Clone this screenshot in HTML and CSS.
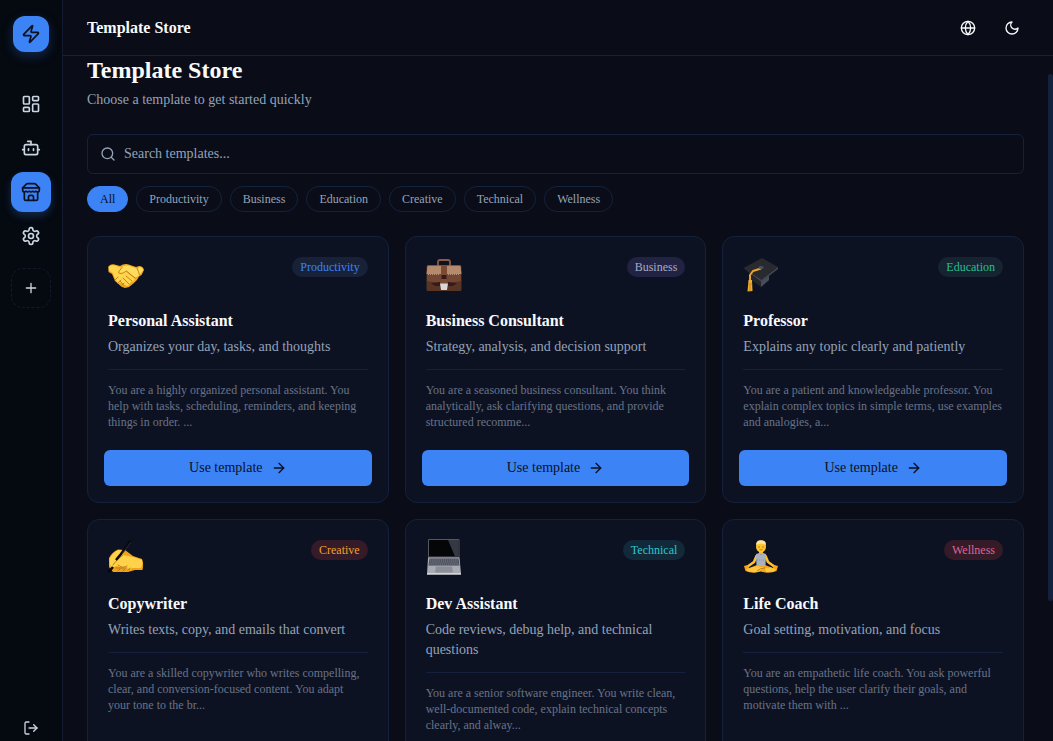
FILE: index.html
```html
<!DOCTYPE html>
<html lang="en">
<head>
<meta charset="utf-8">
<meta name="viewport" content="width=device-width, initial-scale=1">
<title>Template Store</title>
<link rel="stylesheet" href="styles.css">
</head>
<body>
<svg class="defs" aria-hidden="true">
  <symbol id="arrow" viewBox="0 0 24 24"><path d="M5 12h14"/><path d="m12 5 7 7-7 7"/></symbol>
</svg>
<div class="app">
  <aside class="sidebar">
    <a class="logo" href="#" aria-label="Home"><svg class="icon icon-lg" viewBox="0 0 24 24"><path d="M4 14a1 1 0 0 1-.78-1.63l9.9-10.2a.5.5 0 0 1 .86.46l-1.92 6.02A1 1 0 0 0 13 10h7a1 1 0 0 1 .78 1.63l-9.9 10.2a.5.5 0 0 1-.86-.46l1.92-6.02A1 1 0 0 0 11 14z"/></svg></a>
    <nav class="nav">
      <a class="nav-item" href="#" aria-label="Dashboard"><svg class="icon icon-lg" viewBox="0 0 24 24"><rect x="3" y="3" width="7" height="9" rx="1"/><rect x="14" y="3" width="7" height="5" rx="1"/><rect x="14" y="12" width="7" height="9" rx="1"/><rect x="3" y="16" width="7" height="5" rx="1"/></svg></a>
      <a class="nav-item" href="#" aria-label="Agents"><svg class="icon icon-lg" viewBox="0 0 24 24"><path d="M12 8V4H8"/><rect x="4" y="8" width="16" height="12" rx="2"/><path d="M2 14h2M20 14h2M15 13v2M9 13v2"/></svg></a>
      <a class="nav-item active" href="#" aria-label="Store"><svg class="icon icon-lg" viewBox="0 0 24 24"><path d="m2 7 4.41-4.41A2 2 0 0 1 7.83 2h8.34a2 2 0 0 1 1.42.59L22 7"/><path d="M4 12v8a2 2 0 0 0 2 2h12a2 2 0 0 0 2-2v-8"/><path d="M15 22v-4a2 2 0 0 0-2-2h-2a2 2 0 0 0-2 2v4"/><path d="M2 7h20"/><path d="M22 7v3a2 2 0 0 1-2 2a2.7 2.7 0 0 1-1.59-.63.7.7 0 0 0-.82 0A2.7 2.7 0 0 1 16 12a2.7 2.7 0 0 1-1.59-.63.7.7 0 0 0-.82 0A2.7 2.7 0 0 1 12 12a2.7 2.7 0 0 1-1.59-.63.7.7 0 0 0-.82 0A2.7 2.7 0 0 1 8 12a2.7 2.7 0 0 1-1.59-.63.7.7 0 0 0-.82 0A2.7 2.7 0 0 1 4 12a2 2 0 0 1-2-2V7"/></svg></a>
      <a class="nav-item" href="#" aria-label="Settings"><svg class="icon icon-lg" viewBox="0 0 24 24"><path d="M12.22 2h-.44a2 2 0 0 0-2 2v.18a2 2 0 0 1-1 1.73l-.43.25a2 2 0 0 1-2 0l-.15-.08a2 2 0 0 0-2.73.73l-.22.38a2 2 0 0 0 .73 2.73l.15.1a2 2 0 0 1 1 1.72v.51a2 2 0 0 1-1 1.74l-.15.09a2 2 0 0 0-.73 2.73l.22.38a2 2 0 0 0 2.73.73l.15-.08a2 2 0 0 1 2 0l.43.25a2 2 0 0 1 1 1.73V20a2 2 0 0 0 2 2h.44a2 2 0 0 0 2-2v-.18a2 2 0 0 1 1-1.73l.43-.25a2 2 0 0 1 2 0l.15.08a2 2 0 0 0 2.73-.73l.22-.39a2 2 0 0 0-.73-2.73l-.15-.08a2 2 0 0 1-1-1.74v-.5a2 2 0 0 1 1-1.74l.15-.09a2 2 0 0 0 .73-2.73l-.22-.38a2 2 0 0 0-2.73-.73l-.15.08a2 2 0 0 1-2 0l-.43-.25a2 2 0 0 1-1-1.73V4a2 2 0 0 0-2-2z"/><circle cx="12" cy="12" r="3"/></svg></a>
    </nav>
    <button class="nav-add" type="button" aria-label="Add"><svg class="icon" viewBox="0 0 24 24"><path d="M5 12h14M12 5v14"/></svg></button>
    <button class="logout" type="button" aria-label="Log out"><svg class="icon" viewBox="0 0 24 24"><path d="M9 21H5a2 2 0 0 1-2-2V5a2 2 0 0 1 2-2h4"/><path d="m16 17 5-5-5-5"/><path d="M21 12H9"/></svg></button>
  </aside>

  <div class="main">
    <header class="topbar">
      <span class="topbar-title">Template Store</span>
      <div class="topbar-actions">
        <button type="button" aria-label="Language"><svg class="icon" viewBox="0 0 24 24"><circle cx="12" cy="12" r="10"/><path d="M12 2a14.5 14.5 0 0 0 0 20 14.5 14.5 0 0 0 0-20"/><path d="M2 12h20"/></svg></button>
        <button type="button" aria-label="Dark mode"><svg class="icon" viewBox="0 0 24 24"><path d="M12 3a6 6 0 0 0 9 9 9 9 0 1 1-9-9Z"/></svg></button>
      </div>
    </header>

    <div class="viewport">
      <main class="content">
        <h1>Template Store</h1>
        <p class="subtitle">Choose a template to get started quickly</p>

        <label class="search">
          <svg class="icon" viewBox="0 0 24 24" aria-hidden="true"><circle cx="11" cy="11" r="8"/><path d="m21 21-4.3-4.3"/></svg>
          <input type="text" placeholder="Search templates..." aria-label="Search templates">
        </label>

        <div class="filters">
          <button type="button" class="active">All</button>
          <button type="button">Productivity</button>
          <button type="button">Business</button>
          <button type="button">Education</button>
          <button type="button">Creative</button>
          <button type="button">Technical</button>
          <button type="button">Wellness</button>
        </div>

        <section class="grid">
          <article class="card">
            <div class="card-head">
              <svg class="emoji" viewBox="0 0 36 36" aria-hidden="true">
                <path fill="#f3a81f" d="M.3 9.500Q3 6.500 6.500 7.500L12 9Q17 5.500 22 8L28 10 31 9Q35 9 36 13L33.500 18 31 19.500Q29 24 26 26L21 30 17 31Q13 30 11.500 28L7 24 4 17 .5 15Z"/>
                <path fill="#ffd54d" d="M.8 10Q3 7.500 6.500 8.500L13 10.500 10 16Q12 18.500 17 14L27 22Q26 25 23 25L20 29 16 28 14 26 10 26 7 22 5 16 1 13.500Z"/>
                <path fill="#ffdc5b" d="M12.500 11Q18 7 23 9.500L29 11.500 32 10Q35 10.500 35.300 13L31.500 18Q28 21 26 20L18.500 14Q12 18 10.800 15.500Z"/>
                <path fill="none" stroke="#c27a13" stroke-width=".9" stroke-linecap="round" d="M14 10.500 10.500 15Q12 18.500 18.500 14L27 21M18 19l6 5M15 21l6 6M12 24l4.500 5M29 11Q31 15 31.500 18M7 23l3-3M10 26l3-3M14 28l2-2"/>
              </svg>
              <span class="badge productivity">Productivity</span>
            </div>
            <h2>Personal Assistant</h2>
            <p class="desc">Organizes your day, tasks, and thoughts</p>
            <p class="preview">You are a highly organized personal assistant. You help with tasks, scheduling, reminders, and keeping things in order. ...</p>
            <button class="use" type="button">Use template<svg class="icon"><use href="#arrow"/></svg></button>
          </article>

          <article class="card">
            <div class="card-head">
              <svg class="emoji" viewBox="0 0 36 36" aria-hidden="true">
                <path fill="none" stroke="#8b5a41" stroke-width="1.800" d="M12 9V5Q12 3 14 3h8q2 0 2 2v4"/>
                <rect x=".5" y="8.500" width="35" height="25.500" rx="1.500" fill="#573423"/>
                <path fill="#754732" d="M1 12h34v12l-10 2H11L1 24Z"/>
                <path fill="#b58a6d" d="M1.500 8.500h33L35.500 17H.5Z"/>
                <path fill="#7b4b31" d="M15 8.500h6V27h-6Z"/>
                <path fill="#36181d" d="M15.500 18h5v4h-5ZM5 26l9-1v4H9ZM31 26l-9-1v4h5Z"/>
                <path fill="#d8d8dc" d="M14 26.500h8l-1 6.500h-6Z"/>
                <path fill="none" stroke="#d2b49f" stroke-width=".7" stroke-dasharray="1 1" d="M2 17.500h12M22 17.500h12"/>
              </svg>
              <span class="badge business">Business</span>
            </div>
            <h2>Business Consultant</h2>
            <p class="desc">Strategy, analysis, and decision support</p>
            <p class="preview">You are a seasoned business consultant. You think analytically, ask clarifying questions, and provide structured recomme...</p>
            <button class="use" type="button">Use template<svg class="icon"><use href="#arrow"/></svg></button>
          </article>

          <article class="card">
            <div class="card-head">
              <svg class="emoji" viewBox="0 0 36 36" aria-hidden="true">
                <path fill="#24262c" d="M8 16 26 18V23L18 30 8 23Z"/>
                <path fill="#454c5a" d="M18 24 26 18v5l-8 7Z"/>
                <path fill="#292a2f" d="M.5 11 19 1 35 10 18.500 23Z"/>
                <path fill="#454750" d="M.5 11 18.500 23 35 10v2L18.500 25Z"/>
                <path fill="none" stroke="#eaa228" stroke-width="2" stroke-linejoin="round" d="M18 11.500 10 14 7 18V25"/>
                <path fill="#efad2f" d="M5.500 23h3.500l.5 11-5 .5Z"/>
                <path stroke="#b8720f" stroke-width=".7" d="M5 27h4M7 28v6"/>
                <ellipse cx="18" cy="10.500" rx="2.500" ry="1.500" fill="#4b5363"/>
              </svg>
              <span class="badge education">Education</span>
            </div>
            <h2>Professor</h2>
            <p class="desc">Explains any topic clearly and patiently</p>
            <p class="preview">You are a patient and knowledgeable professor. You explain complex topics in simple terms, use examples and analogies, a...</p>
            <button class="use" type="button">Use template<svg class="icon"><use href="#arrow"/></svg></button>
          </article>

          <article class="card">
            <div class="card-head">
              <svg class="emoji" viewBox="0 0 36 36" aria-hidden="true">
                <path fill="#efa31d" d="M1 18Q4 12 10 9.500L17 10 25 16 34 19Q36 24 34.500 30L27 30 20 32 5 32 1 27Z"/>
                <path fill="#ffd24a" d="M1.500 19Q5 12 10.500 10L16 11 15 15 25 17 34 20Q35 24 33 28L25 28 19 29 8 26 4 28 2 25Z"/>
                <path fill="none" stroke="#bb7012" stroke-width=".9" stroke-linecap="round" d="M15 15 9 20 5 25M10 25q5 4 9 1M8 28h11M10 31l2-2M15 31l2-2M20 30l2-2"/>
                <path fill="none" stroke="#080808" stroke-width="2.500" d="M22.800.8 13 14 8 20M5 27 .3 32.500"/>
                <path stroke="#45484d" stroke-width=".6" d="m23 2-9 12"/>
              </svg>
              <span class="badge creative">Creative</span>
            </div>
            <h2>Copywriter</h2>
            <p class="desc">Writes texts, copy, and emails that convert</p>
            <p class="preview">You are a skilled copywriter who writes compelling, clear, and conversion-focused content. You adapt your tone to the br...</p>
            <button class="use" type="button">Use template<svg class="icon"><use href="#arrow"/></svg></button>
          </article>

          <article class="card">
            <div class="card-head">
              <svg class="emoji" viewBox="0 0 36 36" aria-hidden="true">
                <rect x="2" y="-1" width="31.500" height="19" rx="1" fill="#55575f"/>
                <path fill="#050608" d="M3 0h29.500v16.500H3Z"/>
                <path fill="#343943" d="M22 0h10.500v16.500H29Z"/>
                <path fill="#a8abb4" d="M2 17.500h31.500L35 34H1Z"/>
                <path fill="#454956" d="M3.500 18.500h29l1 7h-31Z"/>
                <path stroke="#a7abb8" stroke-width=".6" stroke-dasharray="1.500 .6" d="M4 20h28M4 22h28M3 24h30"/>
                <path fill="#8b8e98" d="M10 26.500h16l1 6H9Z"/>
                <path fill="#d5d5d9" d="M1 33h34v1.700H1Z"/>
              </svg>
              <span class="badge technical">Technical</span>
            </div>
            <h2>Dev Assistant</h2>
            <p class="desc">Code reviews, debug help, and technical questions</p>
            <p class="preview">You are a senior software engineer. You write clean, well-documented code, explain technical concepts clearly, and alway...</p>
            <button class="use" type="button">Use template<svg class="icon"><use href="#arrow"/></svg></button>
          </article>

          <article class="card">
            <div class="card-head">
              <svg class="emoji" viewBox="0 0 36 36" aria-hidden="true">
                <path fill="none" stroke="#ffc02e" stroke-width="2.600" stroke-linejoin="round" stroke-linecap="round" d="M13.500 16 11 22 4 27M22.500 16 25 22 32 27"/>
                <path fill="#f6a51d" d="M1 26l4-1 1 3 8-3h8l8 3 1-3 4 1-1.500 5Q26 34 18 31.500 10 34 2.500 31Z"/>
                <path fill="#ffc83a" d="M4 29 14 26 22 28 14 32Q7 32.500 4 31ZM22 28l6-.5 5 2-2 2-8 .5Z"/>
                <path fill="#ffb21c" d="M16 10h4v4h-4Z"/>
                <path fill="#a9b2c0" d="M13 14q2.500-.5 3-1 2 2.500 4 0 1 .5 3 1l-.5 12h-9Z"/>
                <path stroke="#79869b" stroke-width=".7" stroke-dasharray="1 1" d="M14 20h8"/>
                <ellipse cx="18" cy="6.500" rx="5" ry="6" fill="#ffc52e"/>
                <path fill="#ffe3a1" d="M13 5Q13 0 18 .2 23 0 23 5q-5-3-10 0Z"/>
                <path fill="none" stroke="#98630d" stroke-width=".7" d="M15 7h2M19 7h2M16.500 9.500q1.500 1 3 0M14 31q3-3 8-3"/>
              </svg>
              <span class="badge wellness">Wellness</span>
            </div>
            <h2>Life Coach</h2>
            <p class="desc">Goal setting, motivation, and focus</p>
            <p class="preview">You are an empathetic life coach. You ask powerful questions, help the user clarify their goals, and motivate them with ...</p>
            <button class="use" type="button">Use template<svg class="icon"><use href="#arrow"/></svg></button>
          </article>
        </section>
      </main>
      <div class="scroll-rail" aria-hidden="true"><div class="scroll-thumb"></div></div>
    </div>
  </div>
</div>
</body>
</html>
```
FILE: styles.css
```css
:root {
  --bg: #0a0d18;
  --side: #050910;
  --card: #0d1223;
  --border: #14213d;
  --primary: #3c83f6;
  --ink: #0b1120;
  --text: #f8fafc;
  --muted: #94a3b8;
}

* { box-sizing: border-box; }

body {
  margin: 0;
  background: var(--bg);
  color: var(--text);
  font-family: "Liberation Serif", "Times New Roman", serif;
  font-size: 14px;
  line-height: 20px;
}

h1, h2, p { margin: 0; }
button, input { font: inherit; color: inherit; }
button { padding: 0; border: 0; background: none; cursor: pointer; }

.defs { display: none; }

.icon {
  flex: none;
  width: 16px;
  height: 16px;
  fill: none;
  stroke: currentColor;
  stroke-width: 2;
  stroke-linecap: round;
  stroke-linejoin: round;
}
.icon-lg { width: 20px; height: 20px; }

.app { display: flex; height: 100vh; overflow: hidden; }

.sidebar {
  flex: none;
  display: flex;
  flex-direction: column;
  align-items: center;
  width: 63px;
  padding-top: 16px;
  background: var(--side);
  border-right: 1px solid #131a30;
  color: #cbd5e1;
}

.logo, .nav-item, .nav-add, .logout {
  display: flex;
  align-items: center;
  justify-content: center;
  color: inherit;
}
.logo {
  width: 36px;
  height: 36px;
  border-radius: 12px;
  background: var(--primary);
  color: var(--ink);
  box-shadow: 0 4px 12px rgba(60, 131, 246, .25);
}
.nav { display: flex; flex-direction: column; gap: 4px; margin-top: 32px; }
.nav-item { width: 40px; height: 40px; border-radius: 12px; }
.nav-item.active {
  background: var(--primary);
  color: var(--ink);
  box-shadow: 0 4px 8px rgba(60, 131, 246, .25);
}
.nav-add {
  width: 40px;
  height: 40px;
  margin-top: 12px;
  border: 1px dashed #131a2c;
  border-radius: 12px;
}
.logout { width: 40px; height: 26px; margin-top: auto; }

.main { flex: 1; display: flex; flex-direction: column; min-width: 0; }

.topbar {
  flex: none;
  display: flex;
  align-items: center;
  justify-content: space-between;
  height: 56px;
  padding: 0 23px 0 24px;
  border-bottom: 1px solid var(--border);
}
.topbar-title { font-size: 16px; font-weight: 700; line-height: 24px; }
.topbar-actions { display: flex; gap: 8px; }
.topbar-actions button {
  display: flex;
  align-items: center;
  justify-content: center;
  width: 36px;
  height: 36px;
}

.viewport { flex: 1; display: flex; min-height: 0; }
.content { flex: 1; min-width: 0; padding: 0 24px 24px; overflow-y: auto; scrollbar-width: none; }
.scroll-rail { flex: none; width: 5px; padding-top: 18px; }
.scroll-thumb { height: 79%; border-radius: 3px; background: var(--border); }

h1 { font-size: 24px; font-weight: 700; line-height: 28px; }
.subtitle { margin-top: 6px; color: var(--muted); }

.search {
  display: flex;
  align-items: center;
  gap: 8px;
  height: 40px;
  margin-top: 24px;
  padding: 0 12px;
  border: 1px solid var(--border);
  border-radius: 6px;
  color: var(--muted);
}
.search input { flex: 1; min-width: 0; padding: 0; border: 0; outline: 0; background: none; }
.search input::placeholder { color: var(--muted); opacity: 1; }

.filters { display: flex; flex-wrap: wrap; gap: 8px; margin-top: 12px; }
.filters button {
  padding: 4px 12px;
  border: 1px solid var(--border);
  border-radius: 13px;
  color: var(--muted);
  font-size: 12px;
  line-height: 16px;
}
.filters .active { background: var(--primary); border-color: var(--primary); color: var(--ink); }

.grid {
  display: grid;
  grid-template-columns: repeat(3, minmax(0, 1fr));
  gap: 16px;
  margin-top: 24px;
}
.card {
  display: flex;
  flex-direction: column;
  padding: 20px 16px 16px;
  border: 1px solid var(--border);
  border-radius: 12px;
  background: var(--card);
}
.card-head, .card h2, .desc, .preview { margin-left: 4px; margin-right: 4px; }
.card-head { display: flex; align-items: flex-start; justify-content: space-between; height: 40px; }
.emoji { width: 36px; height: 36px; overflow: visible; }
.badge { padding: 2px 8px; border-radius: 10px; font-size: 12px; line-height: 16px; }
.productivity { background: #172138; color: #3c83f6; }
.business { background: #222242; color: #a3adc8; }
.education { background: #152430; color: #2bbd91; }
.creative { background: #351b27; color: #eea02c; }
.technical { background: #112938; color: #2bc7cf; }
.wellness { background: #351b28; color: #dc6599; }

.card h2 { margin-top: 12px; font-size: 16px; font-weight: 700; line-height: 24px; }
.desc { margin-top: 4px; color: var(--muted); }
.preview {
  margin-top: 12px;
  margin-bottom: 20px;
  padding-top: 12px;
  border-top: 1px solid var(--border);
  color: #687287;
  font-size: 12px;
  line-height: 16px;
}
.use {
  display: flex;
  align-items: center;
  justify-content: center;
  gap: 8px;
  height: 36px;
  margin-top: auto;
  border-radius: 6px;
  background: var(--primary);
  color: var(--ink);
}
```
